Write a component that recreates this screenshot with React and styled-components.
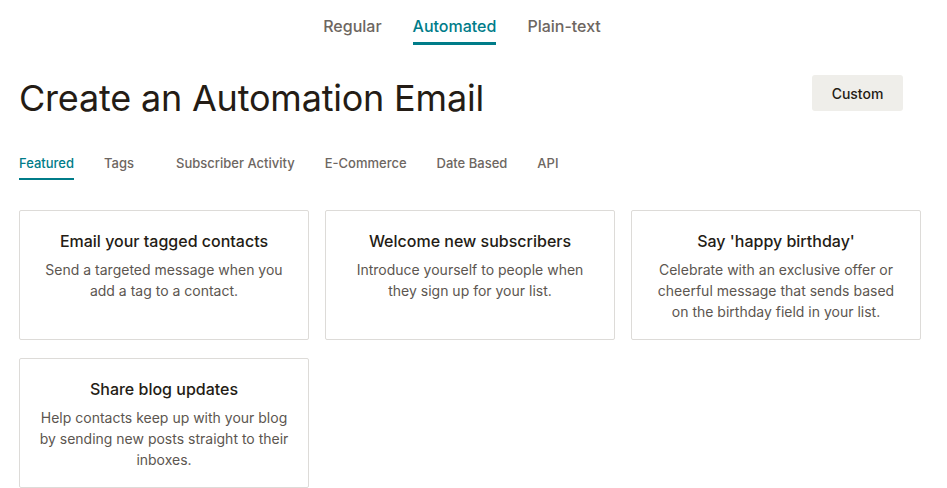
import React, { useState } from 'react';
import styled, { createGlobalStyle } from 'styled-components';

const GlobalStyle = createGlobalStyle`
  * { box-sizing: border-box; }
  body {
    margin: 0;
    background: #fff;
    font-family: Inter, 'Noto Sans', sans-serif;
    color: #241c15;
  }
`;

const Page = styled.div`
  width: 947px;
  padding: 0 26px 0 19px;
`;

const ModeTabs = styled.nav`
  display: flex;
  justify-content: center;
  gap: 31px;
  padding: 16px 0 0 0;
  margin-right: 16px;
`;

const ModeTab = styled.button`
  border: none;
  background: none;
  padding: 0 0 6px 0;
  font-family: inherit;
  font-size: 16px;
  font-weight: 500;
  line-height: 20px;
  color: ${(p) => (p.active ? '#007c89' : '#6d6661')};
  border-bottom: 3px solid ${(p) => (p.active ? '#007c89' : 'transparent')};
  cursor: pointer;
`;

const Header = styled.header`
  display: flex;
  align-items: center;
  justify-content: space-between;
  margin-top: 30px;
  padding-right: 18px;
`;

const Title = styled.h1`
  margin: 0;
  font-size: 36px;
  font-weight: 400;
  letter-spacing: -0.2px;
  color: #241c15;
`;

const CustomButton = styled.button`
  width: 91px;
  height: 36px;
  margin-bottom: 10px;
  border: none;
  border-radius: 3px;
  background: #efeeea;
  font-family: inherit;
  font-size: 14px;
  font-weight: 500;
  color: #241c15;
  cursor: pointer;
`;

const FilterTabs = styled.nav`
  display: flex;
  gap: 30px;
  margin-top: 34px;
`;

const FilterTab = styled.button`
  border: none;
  background: none;
  padding: 0 0 7px 0;
  min-width: ${(p) => p.minWidth || 0}px;
  text-align: left;
  font-family: inherit;
  font-size: 13px;
  font-weight: 500;
  line-height: 16px;
  color: ${(p) => (p.active ? '#007c89' : '#6d6661')};
  border-bottom: 2px solid ${(p) => (p.active ? '#007c89' : 'transparent')};
  cursor: pointer;
`;

const Grid = styled.div`
  display: grid;
  grid-template-columns: repeat(3, 290px);
  column-gap: 16px;
  row-gap: 18px;
  margin-top: 30px;
`;

const Card = styled.div`
  height: 130px;
  border: 1px solid #dddbd8;
  border-radius: 2px;
  padding: 20px 18px 0;
  text-align: center;
`;

const CardTitle = styled.h3`
  margin: 0;
  font-size: 16px;
  font-weight: 500;
  line-height: 20px;
  color: #241c15;
`;

const CardText = styled.p`
  margin: 8px 0 0;
  font-size: 14px;
  line-height: 21px;
  color: #5c5650;
`;

const modes = ['Regular', 'Automated', 'Plain-text'];
const filters = [
  { label: 'Featured' },
  { label: 'Tags', minWidth: 42 },
  { label: 'Subscriber Activity' },
  { label: 'E-Commerce' },
  { label: 'Date Based' },
  { label: 'API' },
];

const templates = [
  {
    title: 'Email your tagged contacts',
    text: 'Send a targeted message when you add a tag to a contact.',
  },
  {
    title: 'Welcome new subscribers',
    text: 'Introduce yourself to people when they sign up for your list.',
  },
  {
    title: "Say 'happy birthday'",
    text: 'Celebrate with an exclusive offer or cheerful message that sends based on the birthday field in your list.',
  },
  {
    title: 'Share blog updates',
    text: 'Help contacts keep up with your blog by sending new posts straight to their inboxes.',
  },
];

const App = () => {
  const [mode, setMode] = useState('Automated');
  const [filter, setFilter] = useState('Featured');
  return (
    <Page>
      <GlobalStyle />
      <ModeTabs>
        {modes.map((m) => (
          <ModeTab key={m} active={m === mode} onClick={() => setMode(m)}>
            {m}
          </ModeTab>
        ))}
      </ModeTabs>
      <Header>
        <Title>Create an Automation Email</Title>
        <CustomButton>Custom</CustomButton>
      </Header>
      <FilterTabs>
        {filters.map((f) => (
          <FilterTab
            key={f.label}
            minWidth={f.minWidth}
            active={f.label === filter}
            onClick={() => setFilter(f.label)}
          >
            {f.label}
          </FilterTab>
        ))}
      </FilterTabs>
      <Grid>
        {templates.map((t) => (
          <Card key={t.title}>
            <CardTitle>{t.title}</CardTitle>
            <CardText>{t.text}</CardText>
          </Card>
        ))}
      </Grid>
    </Page>
  );
};

export default App;
